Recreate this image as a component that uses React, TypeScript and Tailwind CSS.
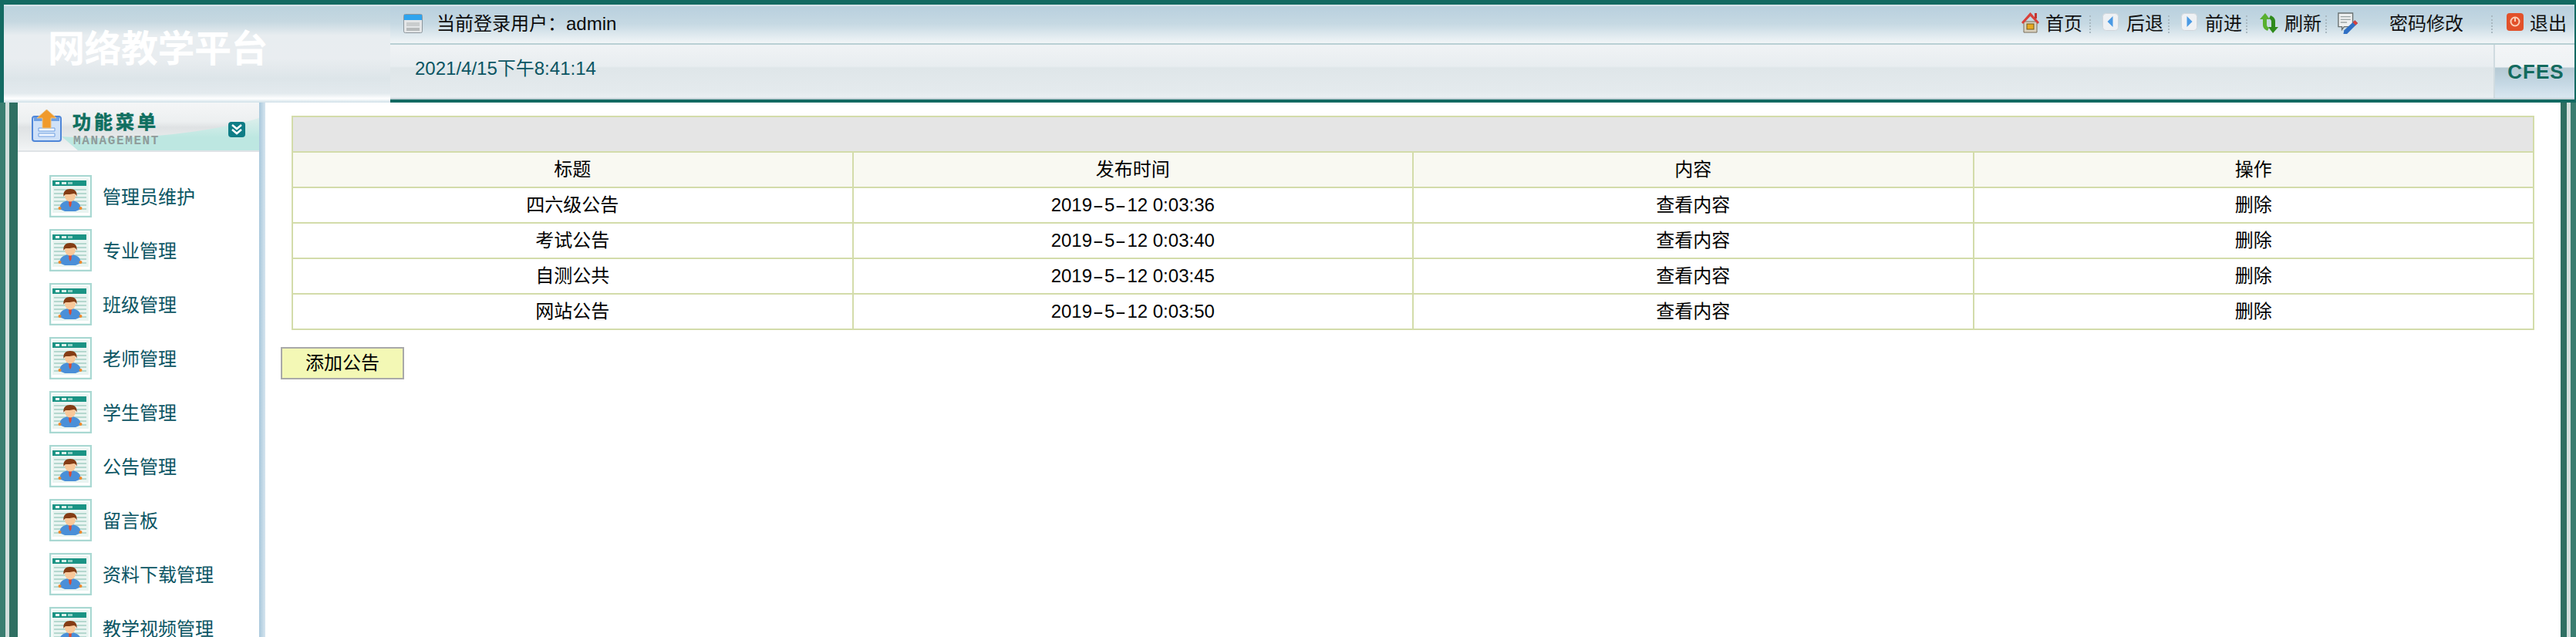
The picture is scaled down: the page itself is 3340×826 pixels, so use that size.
import React from 'react';

const cjk = "font-['Liberation_Sans','Noto_Sans_CJK_SC',sans-serif]";

const PersonIcon = () => (
  <svg width="55" height="55" viewBox="0 0 55 55" className="shrink-0 blur-[0.4px]">
    <rect x="1" y="1" width="53" height="53" fill="#fff" stroke="#a9d8d2" strokeWidth="2.5" />
    <rect x="4" y="4" width="47" height="45" fill="#e9f4f1" />
    <rect x="4" y="7" width="44" height="7" fill="#1a9384" />
    <rect x="8" y="9" width="5" height="3" fill="#fff" />
    <rect x="16" y="9" width="6" height="3" fill="#d8efe9" />
    <rect x="24" y="9" width="6" height="3" fill="#8fcfc4" />
    <g fill="#b5d8cf">
      <rect x="6" y="18" width="42" height="2" />
      <rect x="6" y="23" width="42" height="2" />
      <rect x="6" y="28" width="42" height="2" />
      <rect x="6" y="33" width="42" height="2" />
      <rect x="6" y="38" width="42" height="2" />
      <rect x="6" y="43" width="42" height="2" />
    </g>
    <path d="M14 40c1-4 6-7 13-7s12 3 13 7l1 4-7 3H20l-7-3z" fill="#4a8fd8" />
    <circle cx="13.5" cy="43" r="2" fill="#ee8a2c" />
    <circle cx="40.5" cy="43" r="2" fill="#ee8a2c" />
    <path d="M25 33h4l-.5 6-1.500 3-1.500-3z" fill="#dc4a32" />
    <ellipse cx="27" cy="27" rx="7" ry="7.5" fill="#f8c89a" />
    <path d="M18.500 28c-1-7 3-10 8.500-10s9.500 3 8.500 10c-1-3-2-4-4-4-3 1-8 1-10 1-1 0-2 1-3 3z" fill="#843c14" />
  </svg>
);

const HomeIcon = () => (
  <svg width="25" height="28" viewBox="0 0 25 28" className="shrink-0">
    <path d="M4 13h17v14H4z" fill="#d9d2c0" stroke="#7a6f58" />
    <path d="M12.500 1 1 14l2 2 9.500-10L22 16l2-2z" fill="#d8403a" />
    <rect x="18" y="2" width="3" height="7" fill="#c4352f" />
    <rect x="8" y="16" width="9" height="7" fill="#e8a91f" stroke="#6f5a1e" />
  </svg>
);

const ArrowIcon = ({ dir }: { dir: 'left' | 'right' }) => (
  <svg width="21" height="23" viewBox="0 0 21 23" className="shrink-0">
    <rect x="0.500" y="0.500" width="20" height="22" rx="4" fill="#eef1f4" stroke="#d0d6dc" />
    <path d={dir === 'left' ? 'M13.500 4v14l-7-7z' : 'M7.500 4v14l7-7z'} fill="#4a9ae4" />
  </svg>
);

const RefreshIcon = () => (
  <svg width="24" height="28" viewBox="0 0 24 28" className="shrink-0">
    <path d="M7 1 0 9h4v7c0 4 2 6 6 8l2-4c-2-1-3-2-3-4V9h4z" fill="#58b030" />
    <path d="M17 27l7-8h-4v-7c0-4-2-6-6-8l-2 4c2 1 3 2 3 4v7h-4z" fill="#2f8a1c" />
  </svg>
);

const PencilIcon = () => (
  <svg width="30" height="28" viewBox="0 0 30 30" className="shrink-0">
    <path d="M2 1h20v19H10l-3 4v-4H2z" fill="#eef0f0" stroke="#6a7272" strokeWidth="1.5" />
    <path d="M5 6h14M5 10h14M5 14h9" stroke="#9aa3a3" strokeWidth="1.5" />
    <path d="M25 11l4 4-15 15-5 0 1-5z" fill="#2f6fc4" />
    <path d="M25 11l4 4-3 3-4-4z" fill="#d8403a" />
  </svg>
);

const ExitIcon = () => (
  <svg width="22" height="23" viewBox="0 0 22 23" className="shrink-0">
    <rect width="22" height="23" rx="4" fill="#e2512a" />
    <circle cx="11" cy="11" r="5.500" fill="none" stroke="#fbd0b8" strokeWidth="2" />
    <rect x="10" y="5" width="2" height="6" fill="#fbd0b8" />
  </svg>
);

const Sep = () => <span className="block h-[23px] w-0 border-l-2 border-dotted border-[#a9b8c0]" />;

// the hyphen is wider in the screenshot than in Liberation Sans
const Dash = () => <span className="inline-block w-[16px] text-center scale-x-[1.8]">-</span>;

const DateText = ({ time }: { time: string }) => (
  <>
    2019<Dash />5<Dash />12 {time}
  </>
);

const menus = ['管理员维护', '专业管理', '班级管理', '老师管理', '学生管理', '公告管理', '留言板', '资料下载管理', '教学视频管理'];

const rows = [
  ['四六级公告', '0:03:36'],
  ['考试公告', '0:03:40'],
  ['自测公共', '0:03:45'],
  ['网站公告', '0:03:50'],
];

const cell = 'border-2 border-[#d3dcaa] text-center font-normal p-0';

export default function App() {
  return (
    <div className={`h-[826px] w-[3340px] overflow-hidden flex flex-col bg-white text-[24px] leading-none text-black ${cjk}`}>
      {/* top */}
      <div className="h-[133px] shrink-0 bg-[#136a62] pt-[6px] pl-[5px] pr-[2px] flex">
        <div className="w-[501px] h-[127px] bg-[linear-gradient(180deg,#e4ecf0_0px,#bcd3de_3px,#c6d8e1_22px,#e8edf0_40px,#e9edf0_70px,#dde5e9_96px,#e3eaee_115px,#ffffff_122px,#cfe0e8_127px)] flex pl-[57px] pt-[34px]">
          <span className="text-[48px] font-bold text-white leading-[48px] tracking-[-0.5px]">网络教学平台</span>
        </div>
        <div className="flex-1 flex flex-col pb-[4px]">
          <div className="h-[52px] bg-[linear-gradient(180deg,#e4ecf0_0px,#b9d0de_3px,#c6d9e3_25px,#f1f5f7_50px)] border-b-2 border-[#b9d0d4] flex items-center pr-[10px]">
            <svg width="25" height="25" viewBox="0 0 25 25" className="ml-[17px] shrink-0 -mt-[2px]">
              <rect x="0.500" y="0.500" width="24" height="24" rx="2" fill="#e4e6e8" stroke="#8d979d" />
              <rect x="1" y="1" width="23" height="7" fill="#2fa4ee" />
              <rect x="4" y="11" width="17" height="5" fill="#c9cccd" />
              <rect x="4" y="18" width="17" height="4" fill="#b7babb" />
            </svg>
            <span className="ml-[18px] text-[#0c0c0c]">当前登录用户：admin</span>
            <div className="ml-auto flex items-center text-[#111]">
              <span className="-mt-[5px]"><HomeIcon /></span>
              <span className="ml-[7px]">首页</span>
              <span className="ml-[9px]"><Sep /></span>
              <span className="ml-[15px] -mt-[5px]"><ArrowIcon dir="left" /></span>
              <span className="ml-[10px]">后退</span>
              <span className="ml-[6px]"><Sep /></span>
              <span className="ml-[15px] -mt-[5px]"><ArrowIcon dir="right" /></span>
              <span className="ml-[10px]">前进</span>
              <span className="ml-[5px]"><Sep /></span>
              <span className="ml-[16px] -mt-[3px]"><RefreshIcon /></span>
              <span className="ml-[8px]">刷新</span>
              <span className="ml-[5px]"><Sep /></span>
              <span className="ml-[12px] -mt-[3px]"><PencilIcon /></span>
              <span className="ml-[39px]">密码修改</span>
              <span className="ml-[36px]"><Sep /></span>
              <span className="ml-[18px] -mt-[5px]"><ExitIcon /></span>
              <span className="ml-[8px]">退出</span>
            </div>
          </div>
          <div className="flex-1 flex bg-[linear-gradient(180deg,#f0f3f5_0px,#e8edf0_28px,#dfe6e9_30px,#e4eaed_60px,#ebeff2_70px)] border-b-2 border-[#c5d2d8]">
            <span className="ml-[32px] mt-[19px] text-[#0b5563]">2021/4/15下午8:41:14</span>
            <div className="ml-auto w-[105px] border-l-2 border-[#d0dbe0] bg-[linear-gradient(180deg,#f3f5f7_0px,#eef2f4_29px,#b5c9d3_30px,#c5d8e4_50px,#dbe8f1_70px)] flex justify-center pt-[22px] pl-[3px]">
              <span className="text-[26px] font-bold text-[#136a5e] tracking-[1px] font-['Liberation_Sans',sans-serif]">CFES</span>
            </div>
          </div>
        </div>
      </div>

      {/* body */}
      <div className="flex-1 flex min-h-0">
        <div className="w-[23px] shrink-0 flex">
          <div className="w-[7px] bg-[#3a7d70]" />
          <div className="w-[5px] bg-[#d3dedc]" />
          <div className="w-[11px] bg-[#2f6f62]" />
        </div>

        <div className="w-[313px] shrink-0 flex flex-col bg-white">
          <div className="relative h-[64px] shrink-0 bg-[linear-gradient(180deg,#f5f6f7_0px,#eceff0_25px,#dfe2e4_32px,#e8ebec_48px,#f2f4f5_62px)] border-b-2 border-[#dfe3e6] overflow-hidden">
            <svg width="313" height="62" viewBox="0 0 313 62" className="absolute left-0 top-0">
              <defs>
                <linearGradient id="menuTeal" x1="0" y1="0" x2="0" y2="1">
                  <stop offset="0" stopColor="#dcefec" />
                  <stop offset="0.6" stopColor="#bde7e1" />
                </linearGradient>
              </defs>
              <path d="M57 44C130 50 240 42 313 20v42H78z" fill="url(#menuTeal)" />
            </svg>
            <svg width="40" height="42" viewBox="0 0 40 42" className="absolute left-[18px] top-[9px]">
              <rect x="1" y="9" width="37" height="32" rx="3" fill="#cfe1f8" stroke="#4f86d8" strokeWidth="2" />
              <rect x="3" y="10" width="33" height="5" fill="#6da0e4" />
              <path d="M9 24h21v4H9zM9 31h21v4H9z" fill="#f0f6ff" stroke="#6f9fe0" />
              <path d="M19.500 0 32 11h-7v13H14V11H7z" fill="#f09a2c" stroke="#e9c48a" />
            </svg>
            <span className="absolute left-[71px] top-[14px] text-[24px] font-bold tracking-[4px] text-[#0f6f60] [-webkit-text-stroke:0.6px_#0f6f60]">功能菜单</span>
            <span className="absolute left-[72px] top-[42px] text-[16px] leading-none tracking-[1.6px] font-bold text-[#8f9b9a] font-['Liberation_Mono',monospace]">MANAGEMENT</span>
            <svg width="22" height="20" viewBox="0 0 22 20" className="absolute left-[273px] top-[25px]">
              <rect width="22" height="20" rx="4" fill="#0f7d86" />
              <path d="M5 4l6 5 6-5M5 10l6 5 6-5" fill="none" stroke="#fff" strokeWidth="2.500" />
            </svg>
          </div>
          <div className="flex flex-col pt-[30px] pl-[41px] gap-[15px]">
            {menus.map((m) => (
              <div key={m} className="flex items-center h-[55px] shrink-0">
                <PersonIcon />
                <span className="ml-[14px] mt-[2px] text-[#0b5563]">{m}</span>
              </div>
            ))}
          </div>
        </div>

        <div className="w-[8px] shrink-0 bg-gradient-to-r from-[#a9c8dc] to-[#d6e5ef]" />

        <div className="flex-1 min-w-0 pt-[17px] pl-[20px] pr-[34px]">
          <table className="ml-[14px] w-[2908px] table-fixed border-collapse border-spacing-0">
            <thead>
              <tr className="h-[46px] bg-[#e5e5e5]">
                <td colSpan={4} className={cell} />
              </tr>
              <tr className="h-[46px] bg-[#f9f9f2]">
                <th className={cell}>标题</th>
                <th className={cell}>发布时间</th>
                <th className={cell}>内容</th>
                <th className={cell}>操作</th>
              </tr>
            </thead>
            <tbody>
              {rows.map((r) => (
                <tr key={r[0]} className="h-[46px]">
                  <td className={cell}>{r[0]}</td>
                  <td className={cell}><DateText time={r[1]} /></td>
                  <td className={cell}>查看内容</td>
                  <td className={cell}>删除</td>
                </tr>
              ))}
            </tbody>
          </table>
          <button className="block mt-[22px] w-[160px] h-[42px] bg-[#f3f8b5] border-2 border-[#a9a9a9] text-center">添加公告</button>
        </div>

        <div className="w-[20px] shrink-0 flex">
          <div className="w-[8px] bg-[#2f6f62]" />
          <div className="w-[5px] bg-[#d3dedc]" />
          <div className="w-[7px] bg-[#3a7d70]" />
        </div>
      </div>
    </div>
  );
}
